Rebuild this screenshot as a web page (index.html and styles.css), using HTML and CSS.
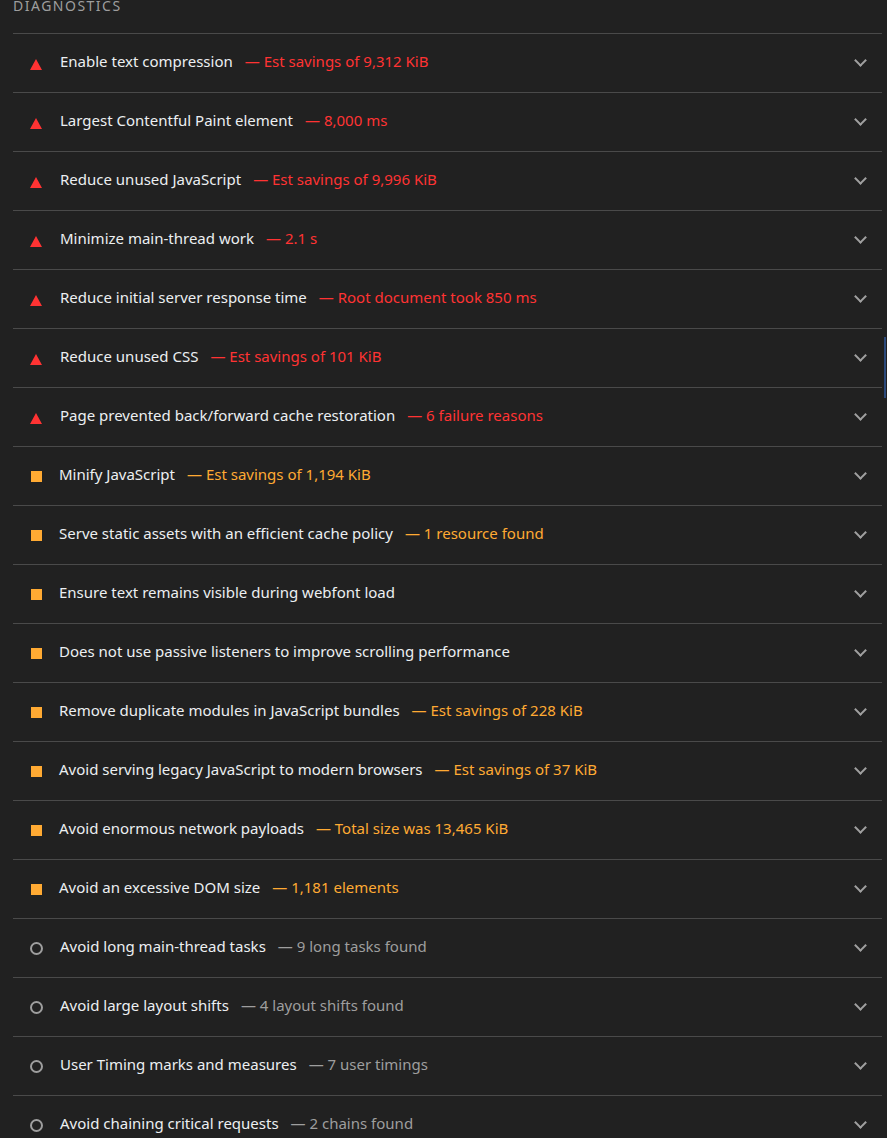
FILE: index.html
```html
<!DOCTYPE html>
<html>
<head lang="en">
    <meta charset="UTF-8">
    <title>Diagnostics</title>
    <link rel="stylesheet" href="styles.css">
</head>
<body>
<div class="group">
    <div class="group-title">Diagnostics</div>
    <div class="audit fail">
        <span class="icon"></span>
        <span class="title">Enable text compression</span>
        <span class="display">— Est savings of 9,312 KiB</span>
        <span class="arrow"></span>
    </div>
    <div class="audit fail">
        <span class="icon"></span>
        <span class="title">Largest Contentful Paint element</span>
        <span class="display">— 8,000 ms</span>
        <span class="arrow"></span>
    </div>
    <div class="audit fail">
        <span class="icon"></span>
        <span class="title">Reduce unused JavaScript</span>
        <span class="display">— Est savings of 9,996 KiB</span>
        <span class="arrow"></span>
    </div>
    <div class="audit fail">
        <span class="icon"></span>
        <span class="title">Minimize main-thread work</span>
        <span class="display">— 2.1 s</span>
        <span class="arrow"></span>
    </div>
    <div class="audit fail">
        <span class="icon"></span>
        <span class="title">Reduce initial server response time</span>
        <span class="display">— Root document took 850 ms</span>
        <span class="arrow"></span>
    </div>
    <div class="audit fail">
        <span class="icon"></span>
        <span class="title">Reduce unused CSS</span>
        <span class="display">— Est savings of 101 KiB</span>
        <span class="arrow"></span>
    </div>
    <div class="audit fail">
        <span class="icon"></span>
        <span class="title">Page prevented back/forward cache restoration</span>
        <span class="display">— 6 failure reasons</span>
        <span class="arrow"></span>
    </div>
    <div class="audit average">
        <span class="icon"></span>
        <span class="title">Minify JavaScript</span>
        <span class="display">— Est savings of 1,194 KiB</span>
        <span class="arrow"></span>
    </div>
    <div class="audit average">
        <span class="icon"></span>
        <span class="title">Serve static assets with an efficient cache policy</span>
        <span class="display">— 1 resource found</span>
        <span class="arrow"></span>
    </div>
    <div class="audit average">
        <span class="icon"></span>
        <span class="title">Ensure text remains visible during webfont load</span>
        <span class="arrow"></span>
    </div>
    <div class="audit average">
        <span class="icon"></span>
        <span class="title">Does not use passive listeners to improve scrolling performance</span>
        <span class="arrow"></span>
    </div>
    <div class="audit average">
        <span class="icon"></span>
        <span class="title">Remove duplicate modules in JavaScript bundles</span>
        <span class="display">— Est savings of 228 KiB</span>
        <span class="arrow"></span>
    </div>
    <div class="audit average">
        <span class="icon"></span>
        <span class="title">Avoid serving legacy JavaScript to modern browsers</span>
        <span class="display">— Est savings of 37 KiB</span>
        <span class="arrow"></span>
    </div>
    <div class="audit average">
        <span class="icon"></span>
        <span class="title">Avoid enormous network payloads</span>
        <span class="display">— Total size was 13,465 KiB</span>
        <span class="arrow"></span>
    </div>
    <div class="audit average">
        <span class="icon"></span>
        <span class="title">Avoid an excessive DOM size</span>
        <span class="display">— 1,181 elements</span>
        <span class="arrow"></span>
    </div>
    <div class="audit info">
        <span class="icon"></span>
        <span class="title">Avoid long main-thread tasks</span>
        <span class="display">— 9 long tasks found</span>
        <span class="arrow"></span>
    </div>
    <div class="audit info">
        <span class="icon"></span>
        <span class="title">Avoid large layout shifts</span>
        <span class="display">— 4 layout shifts found</span>
        <span class="arrow"></span>
    </div>
    <div class="audit info">
        <span class="icon"></span>
        <span class="title">User Timing marks and measures</span>
        <span class="display">— 7 user timings</span>
        <span class="arrow"></span>
    </div>
    <div class="audit info">
        <span class="icon"></span>
        <span class="title">Avoid chaining critical requests</span>
        <span class="display">— 2 chains found</span>
        <span class="arrow"></span>
    </div>
</div>
<div class="scroll-mark"></div>
</body>
</html>
```

FILE: styles.css
```css
* {
    margin: 0;
    padding: 0;
    box-sizing: border-box;
}
html, body {
    background: #212121;
}
body {
    font-family: "Noto Sans", "Open Sans", sans-serif;
    font-size: 15px;
    color: #e8eaed;
    height: 1138px;
    overflow: hidden;
    position: relative;
}
.group {
    margin-left: 13px;
    width: 869px;
}
.group-title {
    height: 33px;
    font-size: 14px;
    line-height: 12px;
    letter-spacing: 1.5px;
    text-transform: uppercase;
    color: #9e9e9e;
}
.audit {
    display: flex;
    align-items: center;
    height: 59px;
    border-top: 1px solid #4a4a4a;
    padding-left: 17px;
    padding-right: 15px;
    padding-bottom: 4px;
    white-space: nowrap;
}
.icon {
    width: 13px;
    height: 13px;
    margin-right: 18px;
    flex: none;
}
.title {
    color: #eceff1;
}
.display {
    margin-left: 12px;
}
.arrow {
    margin-left: auto;
    width: 9px;
    height: 9px;
    border-right: 2px solid #a0a0a0;
    border-bottom: 2px solid #a0a0a0;
    transform: rotate(45deg);
    margin-top: -1px;
    margin-right: 2px;
}

.fail .icon {
    width: 0;
    height: 0;
    border-left: 6.5px solid transparent;
    border-right: 6.5px solid transparent;
    border-bottom: 11px solid #ff3333;
    margin-top: 6px;
}
.fail .display {
    color: #ff3333;
}

.average .icon {
    width: 11px;
    height: 11px;
    margin-left: 1px;
    background: #ffaa33;
    margin-right: 17px;
    margin-top: 4px;
}
.average .display {
    color: #ffaa33;
}

.info .icon {
    border: 2px solid #9e9e9e;
    border-radius: 50%;
    margin-top: 4px;
    margin-right: 17px;
}
.info .display {
    color: #9e9e9e;
}

.scroll-mark {
    position: absolute;
    left: 884px;
    top: 337px;
    width: 2px;
    height: 61px;
    background: #2c4a7c;
}
```
